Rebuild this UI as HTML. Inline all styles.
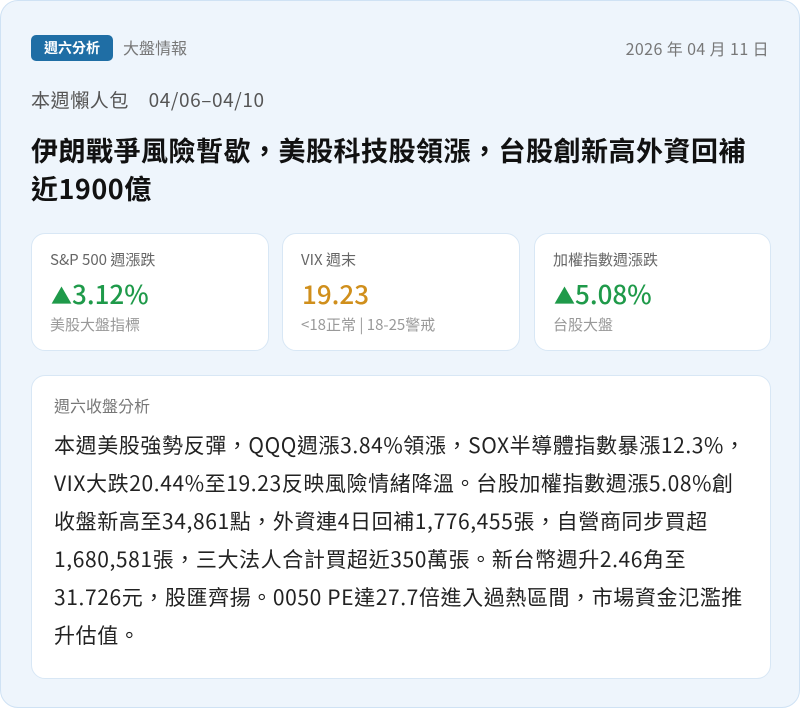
<!DOCTYPE html>
<html><head><meta charset="utf-8"><style>
*{margin:0;padding:0;box-sizing:border-box}
html,body{width:800px;height:708px;background:#fff;overflow:hidden}
body{font-family:"Noto Sans CJK TC","Liberation Sans",sans-serif}
.outer{position:absolute;left:0;top:0;width:800px;height:708px;background:#eef5fc;border:1px solid #cfe2f4;border-radius:18px}
.tag{position:absolute;left:30px;top:34px;width:82px;height:26px;background:#1f6ea5;color:#fff;font-size:14px;font-weight:bold;border-radius:5px;text-align:center;line-height:26px}
.cat{position:absolute;left:122px;top:35px;font-size:16px;color:#777;line-height:22px}
.date{position:absolute;right:30px;top:36px;font-size:16px;color:#777;line-height:22px;letter-spacing:0.4px}
.week{position:absolute;left:30px;top:86px;font-size:19px;color:#555;line-height:26px;letter-spacing:0.6px}
.title{position:absolute;left:30px;top:130px;width:760px;font-size:27px;font-weight:bold;color:#111;line-height:38px;letter-spacing:0.5px;white-space:nowrap}
.m{position:absolute;top:232px;width:238px;height:118px;background:#fff;border:1px solid #d8e7f5;border-radius:14px}
.m .l{position:absolute;left:18px;top:16px;font-size:15px;color:#666;line-height:20px}
.val{position:absolute;left:19px;top:44px;font-size:26px;font-weight:500;line-height:32px}
.val small{font-size:21px}
.sub{position:absolute;left:18px;top:81px;font-size:15px;color:#999;line-height:20px}
.an{position:absolute;left:30px;top:374px;width:740px;height:304px;background:#fff;border:1px solid #d8e7f5;border-radius:14px}
.an .h{position:absolute;left:22px;top:18px;font-size:16px;color:#777;line-height:22px}
.an .b{position:absolute;left:22px;top:50px;width:710px;font-size:21px;color:#222;line-height:38px;white-space:nowrap;letter-spacing:0.6px}
</style></head><body>
<div class="outer">
<div class="tag">週六分析</div>
<div class="cat">大盤情報</div>
<div class="date">2026 年 04 月 11 日</div>
<div class="week">本週懶人包　04/06–04/10</div>
<div class="title">伊朗戰爭風險暫歇，美股科技股領漲，台股創新高外資回補<br>近1900億</div>
<div class="m" style="left:30px"><div class="l">S&amp;P 500 週漲跌</div><div class="val" style="color:#1f9a4a"><small>▲</small>3.12%</div><div class="sub">美股大盤指標</div></div>
<div class="m" style="left:281px"><div class="l">VIX 週末</div><div class="val" style="color:#d08f1c">19.23</div><div class="sub">&lt;18正常 | 18-25警戒</div></div>
<div class="m" style="left:533px;width:237px"><div class="l">加權指數週漲跌</div><div class="val" style="color:#1f9a4a"><small>▲</small>5.08%</div><div class="sub">台股大盤</div></div>
<div class="an"><div class="h">週六收盤分析</div>
<div class="b">本週美股強勢反彈，QQQ週漲3.84%領漲，SOX半導體指數暴漲12.3%，<br>VIX大跌20.44%至19.23反映風險情緒降溫。台股加權指數週漲5.08%創<br>收盤新高至34,861點，外資連4日回補1,776,455張，自營商同步買超<br>1,680,581張，三大法人合計買超近350萬張。新台幣週升2.46角至<br>31.726元，股匯齊揚。0050 PE達27.7倍進入過熱區間，市場資金氾濫推<br>升估值。</div></div>
</div>
</body></html>
